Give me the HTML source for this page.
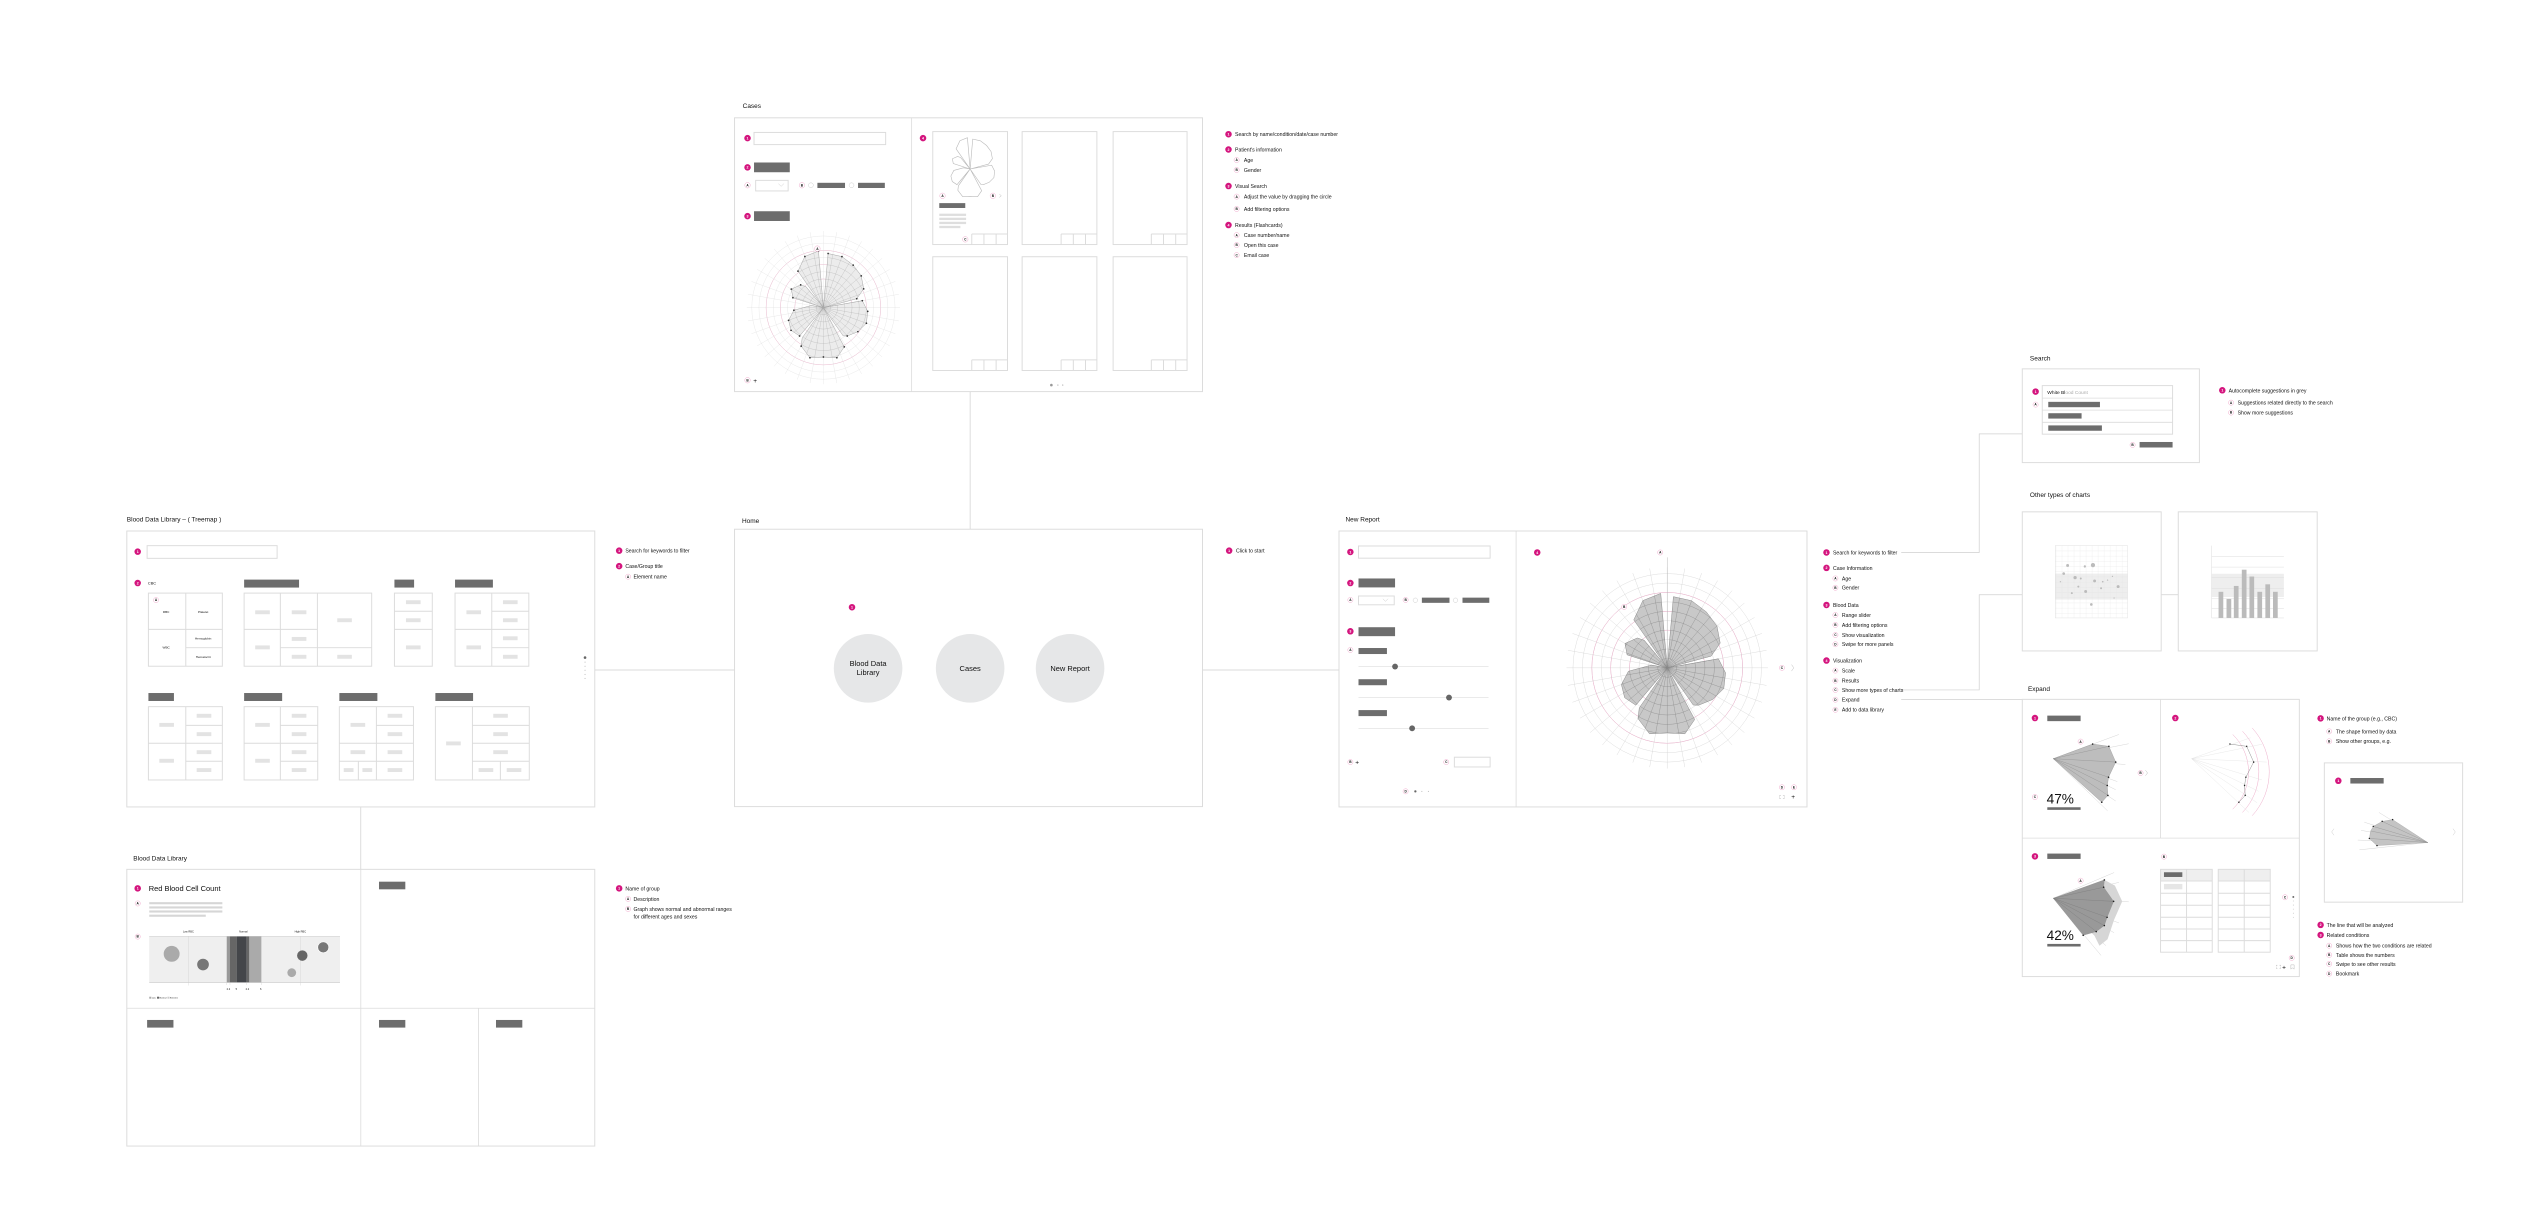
<!DOCTYPE html>
<html><head><meta charset="utf-8"><style>
html,body{margin:0;padding:0;background:#fff;width:2548px;height:1226px;overflow:hidden}
svg{display:block}
text{font-family:"Liberation Sans",Arial,sans-serif;fill:#111}
.f{fill:#fff;stroke:#dcdcdc;stroke-width:.6}
.fr{fill:none;stroke:#dcdcdc;stroke-width:.6}
.b{fill:#6d6d6d}
.lg{fill:#dedede}
.ln{stroke:#dcdcdc;stroke-width:.5;fill:none}
.cn{stroke:#d0d0d0;stroke-width:.45;fill:none}
.m circle{fill:#d4157e}
.m text{fill:#fff;font-size:2.2px;text-anchor:middle;font-weight:bold}
.k circle{fill:#fff;stroke:#f0a8cb;stroke-width:.3}
.k text{font-size:2px;text-anchor:middle;font-weight:bold}
.n{font-size:3.2px}
.ti{font-size:4px}
.tl{font-size:1.9px;fill:#888;text-anchor:middle}
</style></head><body>
<svg width="2548" height="1226" viewBox="0 0 1568 754.5" xmlns="http://www.w3.org/2000/svg">
<defs>
<g id="sp" stroke-width=".22">
<line x1="0" y1="-62" x2="0" y2="62"/><line x1="10.8" y1="-61.1" x2="-10.8" y2="61.1"/><line x1="21.2" y1="-58.3" x2="-21.2" y2="58.3"/><line x1="31" y1="-53.7" x2="-31" y2="53.7"/><line x1="39.9" y1="-47.5" x2="-39.9" y2="47.5"/><line x1="47.5" y1="-39.9" x2="-47.5" y2="39.9"/><line x1="53.7" y1="-31" x2="-53.7" y2="31"/><line x1="58.3" y1="-21.2" x2="-58.3" y2="21.2"/><line x1="61.1" y1="-10.8" x2="-61.1" y2="10.8"/><line x1="62" y1="0" x2="-62" y2="0"/><line x1="61.1" y1="10.8" x2="-61.1" y2="-10.8"/><line x1="58.3" y1="21.2" x2="-58.3" y2="-21.2"/><line x1="53.7" y1="31" x2="-53.7" y2="-31"/><line x1="47.5" y1="39.9" x2="-47.5" y2="-39.9"/><line x1="39.9" y1="47.5" x2="-39.9" y2="-47.5"/><line x1="31" y1="53.7" x2="-31" y2="-53.7"/><line x1="21.2" y1="58.3" x2="-21.2" y2="-58.3"/><line x1="10.8" y1="61.1" x2="-10.8" y2="-61.1"/>
</g>
<g id="rings" fill="none" stroke-width=".22">
<circle r="5.8"/><circle r="11.6"/><circle r="17.4"/><circle r="23.2"/><circle r="29"/><circle r="34.8"/><circle r="40.6"/><circle r="46.4"/><circle r="52.2"/><circle r="58"/>
</g>
<polygon id="pet" points="0,0 -20.6,-29.5 -15,-41.4 -4,-45.8 0,0 3.8,-43.8 15,-41.3 24.1,-34.4 30.6,-25.7 32.6,-15.2 27,-7.2 0,0 31.5,-5.6 35.9,3.1 34.8,12.7 27.9,19.5 19.3,23 16,22.9 0,0 16.9,31.8 10.9,40.6 0,40 -10.9,40.6 -18,31.2 -17.2,24.6 0,0 -19.3,23 -26.2,18.4 -28.2,10.3 -23.9,2.1 -9.8,-1.7 0,0 -24.7,-8 -26,-15 -18.4,-18.4 -14.1,-16.9 0,0"/>
<clipPath id="pc"><use href="#pet"/></clipPath>
<pattern id="gp" width="3.7" height="3.2" patternUnits="userSpaceOnUse"><path d="M3.7 0V3.2M0 3.2H3.7" stroke="#ddd" stroke-width=".25" fill="none"/></pattern>
</defs>

<!-- connectors -->
<path class="cn" d="M597 241V326M366 412.3H452M740 412.3H824M222 496.6V535M1170 340H1218V267H1244.5M1170 424.6H1218V366H1244.5M1330 366H1340.5M1170 430.4H1244.5"/>

<!-- ================= CASES ================= -->
<text class="ti" x="457" y="66.5">Cases</text>
<rect class="f" x="452" y="72.5" width="288" height="168.5"/>
<line class="ln" x1="561" y1="72.5" x2="561" y2="241"/>
<g class="m" transform="translate(460,85)"><circle r="2"/><text y=".8">1</text></g>
<rect class="f" x="464" y="81.5" width="81" height="7.5"/>
<g class="m" transform="translate(460,103)"><circle r="2"/><text y=".8">2</text></g>
<rect class="b" x="464" y="100" width="22" height="6"/>
<g class="k" transform="translate(460,114)"><circle r="1.7"/><text y=".7">A</text></g>
<rect class="f" x="465" y="111" width="20" height="6.5"/><path d="M479 113l1.7 1.7 1.7-1.7" stroke="#ccc" stroke-width=".3" fill="none"/>
<g class="k" transform="translate(493.5,114)"><circle r="1.7"/><text y=".7">B</text></g>
<circle cx="499" cy="114" r="1.5" fill="#fff" stroke="#ccc" stroke-width=".3"/><rect class="b" x="503" y="112.5" width="17" height="3.2"/>
<circle cx="524" cy="114" r="1.5" fill="#fff" stroke="#ccc" stroke-width=".3"/><rect class="b" x="528" y="112.5" width="16.5" height="3.2"/>
<g class="m" transform="translate(460,133)"><circle r="2"/><text y=".8">3</text></g>
<rect class="b" x="464" y="130" width="22" height="6"/>
<g transform="translate(506.7,189.3) scale(.76)">
<use href="#rings" stroke="#d8d8d8"/>
<g fill="none" stroke="#ecabc8" stroke-width=".3"><circle r="23.2"/><circle r="34.8"/><circle r="46.4"/></g>
<use href="#sp" stroke="#d8d8d8"/>
<use href="#pet" fill="#ececec" stroke="#888" stroke-width=".3"/>
<g clip-path="url(#pc)"><use href="#sp" stroke="#aaa"/><use href="#rings" stroke="#aaa"/></g>
<g fill="#333"><circle cx="-20.6" cy="-29.5" r=".7"/><circle cx="-15" cy="-41.4" r=".7"/><circle cx="-4" cy="-45.8" r=".7"/><circle cx="3.8" cy="-43.8" r=".7"/><circle cx="15" cy="-41.3" r=".7"/><circle cx="24.1" cy="-34.4" r=".7"/><circle cx="30.6" cy="-25.7" r=".7"/><circle cx="32.6" cy="-15.2" r=".7"/><circle cx="27" cy="-7.2" r=".7"/><circle cx="31.5" cy="-5.6" r=".7"/><circle cx="35.9" cy="3.1" r=".7"/><circle cx="34.8" cy="12.7" r=".7"/><circle cx="27.9" cy="19.5" r=".7"/><circle cx="19.3" cy="23" r=".7"/><circle cx="16.9" cy="31.8" r=".7"/><circle cx="10.9" cy="40.6" r=".7"/><circle cx="0" cy="40" r=".7"/><circle cx="-10.9" cy="40.6" r=".7"/><circle cx="-18" cy="31.2" r=".7"/><circle cx="-19.3" cy="23" r=".7"/><circle cx="-26.2" cy="18.4" r=".7"/><circle cx="-28.2" cy="10.3" r=".7"/><circle cx="-23.9" cy="2.1" r=".7"/><circle cx="-24.7" cy="-8" r=".7"/><circle cx="-26" cy="-15" r=".7"/><circle cx="-18.4" cy="-18.4" r=".7"/></g>
</g>
<g class="k" transform="translate(503,153)"><circle r="1.7"/><text y=".7">A</text></g>
<g class="k" transform="translate(460,234)"><circle r="1.7"/><text y=".7">B</text></g>
<text x="463.5" y="235.6" font-size="4">+</text>
<g class="m" transform="translate(568,85)"><circle r="2"/><text y=".8">4</text></g>
<!-- cards -->
<rect class="f" x="574" y="81" width="46" height="69.5"/>
<rect class="f" x="629" y="81" width="46" height="69.5"/>
<rect class="f" x="685" y="81" width="45.5" height="69.5"/>
<rect class="f" x="574" y="158" width="46" height="70"/>
<rect class="f" x="629" y="158" width="46" height="70"/>
<rect class="f" x="685" y="158" width="45.5" height="70"/>
<g class="fr"><path d="M598 144v6.5M605.5 144v6.5M613 144v6.5M598 144H620"/>
<path d="M653 144v6.5M660.5 144v6.5M668 144v6.5M653 144H675"/>
<path d="M708.5 144v6.5M716 144v6.5M723.5 144v6.5M708.5 144H730.5"/>
<path d="M598 221.5v6.5M605.5 221.5v6.5M613 221.5v6.5M598 221.5H620"/>
<path d="M653 221.5v6.5M660.5 221.5v6.5M668 221.5v6.5M653 221.5H675"/>
<path d="M708.5 221.5v6.5M716 221.5v6.5M723.5 221.5v6.5M708.5 221.5H730.5"/></g>
<g transform="translate(597,104) scale(.42)"><use href="#pet" fill="#fff" stroke="#bbb" stroke-width=".9"/></g>
<g class="k" transform="translate(580,120.5)"><circle r="1.7"/><text y=".7">A</text></g>
<g class="k" transform="translate(611,120.5)"><circle r="1.7"/><text y=".7">B</text></g>
<path d="M615 119.5l1.2 1-1.2 1" stroke="#bbb" stroke-width=".3" fill="none"/>
<rect class="b" x="578" y="125" width="16" height="3"/>
<rect class="lg" x="578" y="131.5" width="16.5" height="1.4"/><rect class="lg" x="578" y="134" width="16.5" height="1.4"/><rect class="lg" x="578" y="136.5" width="16.5" height="1.4"/><rect class="lg" x="578" y="139" width="13" height="1.4"/>
<g class="k" transform="translate(594,147.3)"><circle r="1.7"/><text y=".7">C</text></g>
<g fill="#999"><circle cx="647" cy="237" r=".8"/><circle cx="651" cy="237" r=".35"/><circle cx="654" cy="237" r=".35"/></g>
<!-- notes -->
<g class="m" transform="translate(756,82.6)"><circle r="2"/><text y=".8">1</text></g><text class="n" x="760" y="83.8">Search by name/condition/date/case number</text>
<g class="m" transform="translate(756,92)"><circle r="2"/><text y=".8">2</text></g><text class="n" x="760" y="93.2">Patient's information</text>
<g class="k" transform="translate(761,98.5)"><circle r="1.6"/><text y=".7">A</text></g><text class="n" x="765.5" y="99.7">Age</text>
<g class="k" transform="translate(761,104.6)"><circle r="1.6"/><text y=".7">B</text></g><text class="n" x="765.5" y="105.8">Gender</text>
<g class="m" transform="translate(756,114.5)"><circle r="2"/><text y=".8">3</text></g><text class="n" x="760" y="115.7">Visual Search</text>
<g class="k" transform="translate(761,121)"><circle r="1.6"/><text y=".7">A</text></g><text class="n" x="765.5" y="122.2">Adjust the value by dragging the circle</text>
<g class="k" transform="translate(761,128.6)"><circle r="1.6"/><text y=".7">B</text></g><text class="n" x="765.5" y="129.8">Add filtering options</text>
<g class="m" transform="translate(756,138.5)"><circle r="2"/><text y=".8">4</text></g><text class="n" x="760" y="139.7">Results (Flashcards)</text>
<g class="k" transform="translate(761,144.7)"><circle r="1.6"/><text y=".7">A</text></g><text class="n" x="765.5" y="145.9">Case number/name</text>
<g class="k" transform="translate(761,150.8)"><circle r="1.6"/><text y=".7">B</text></g><text class="n" x="765.5" y="152">Open this case</text>
<g class="k" transform="translate(761,157)"><circle r="1.6"/><text y=".7">C</text></g><text class="n" x="765.5" y="158.2">Email case</text>

<!-- ================= HOME ================= -->
<text class="ti" x="456.6" y="322">Home</text>
<rect class="f" x="452" y="325.7" width="288" height="170.7"/>
<g class="m" transform="translate(524.3,373.7)"><circle r="2"/><text y=".8">1</text></g>
<g fill="#e6e7e8"><circle cx="534.2" cy="411.3" r="21.1"/><circle cx="597" cy="411.3" r="21.1"/><circle cx="658.5" cy="411.3" r="21.1"/></g>
<g font-size="4.6" text-anchor="middle"><text x="534.2" y="410">Blood Data</text><text x="534.2" y="415.5">Library</text><text x="597" y="413">Cases</text><text x="658.5" y="413">New Report</text></g>
<g class="m" transform="translate(756.4,338.9)"><circle r="2"/><text y=".8">1</text></g><text class="n" x="760.6" y="340.1">Click to start</text>

<!-- ================= TREEMAP ================= -->
<text class="ti" x="78" y="321">Blood Data Library – ( Treemap )</text>
<rect class="f" x="78" y="326.8" width="288" height="169.8"/>
<g class="m" transform="translate(84.7,339.5)"><circle r="2"/><text y=".8">1</text></g>
<rect class="f" x="90.5" y="335.8" width="80" height="7.8"/>
<g class="m" transform="translate(84.7,358.8)"><circle r="2"/><text y=".8">2</text></g>
<text x="91" y="359.8" font-size="2.4">CBC</text>
<g class="fr">
<rect x="91.3" y="365" width="45.5" height="45"/><path d="M114.3 365V410M91.3 387.3H136.8M114.3 398.6H136.8"/>
<rect x="150.2" y="365" width="78.5" height="45"/><path d="M172.5 365V410M195.3 365V410M150.2 387.3H195.3M172.5 398.6H228.7"/>
<rect x="242.7" y="365" width="23.3" height="45"/><path d="M242.7 376.2H266M242.7 387.3H266"/>
<rect x="280" y="365" width="45.4" height="45"/><path d="M302.6 365V410M280 387.3H325.4M302.6 376.2H325.4M302.6 398.6H325.4"/>
<rect x="91.3" y="434.9" width="45.5" height="45.1"/><path d="M114.3 434.9V480M91.3 457.4H136.8M114.3 446.4H136.8M114.3 468.5H136.8"/>
<rect x="150.2" y="434.9" width="45.3" height="45.1"/><path d="M172.5 434.9V480M150.2 457.4H195.5M172.5 446.4H195.5M172.5 468.5H195.5"/>
<rect x="208.8" y="434.9" width="45.6" height="45.1"/><path d="M231.6 434.9V480M208.8 457.4H254.4M208.8 468.5H231.6M220.5 468.5V480M231.6 446.4H254.4M231.6 468.5H254.4"/>
<rect x="267.9" y="434.9" width="57.8" height="45.1"/><path d="M290.7 434.9V480M290.7 446.4H325.7M290.7 457.4H325.7M290.7 468.5H325.7M307.9 468.5V480"/>
</g>
<g class="b"><rect x="150.2" y="356.7" width="33.8" height="4.9"/><rect x="242.7" y="356.7" width="12.1" height="4.9"/><rect x="280" y="356.7" width="23.3" height="4.9"/>
<rect x="91.3" y="426.5" width="15.7" height="4.9"/><rect x="150.2" y="426.5" width="23.4" height="4.9"/><rect x="208.8" y="426.5" width="23.4" height="4.9"/><rect x="267.9" y="426.5" width="23.2" height="4.9"/></g>
<g class="k" transform="translate(96,369.3)"><circle r="1.6"/><text y=".7">A</text></g>
<g font-size="1.9" fill="#777" text-anchor="middle"><text x="102.2" y="377.4" fill="#777">RBC</text><text x="125" y="377.4" fill="#777">Platelet</text><text x="102.2" y="399.2" fill="#777">WBC</text><text x="125" y="393.6" fill="#777">Hemoglobin</text><text x="125" y="404.9" fill="#777">Hematocrit</text></g>
<g fill="#e3e3e3">
<rect x="157" y="375.6" width="9" height="2.4"/><rect x="179.5" y="375.6" width="9" height="2.4"/><rect x="207.5" y="380.5" width="9" height="2.4"/><rect x="157" y="397.2" width="9" height="2.4"/><rect x="179.5" y="392" width="9" height="2.4"/><rect x="179.5" y="403" width="9" height="2.4"/><rect x="207.5" y="403" width="9" height="2.4"/>
<rect x="249.8" y="369.4" width="9" height="2.4"/><rect x="249.8" y="380.5" width="9" height="2.4"/><rect x="249.8" y="397.2" width="9" height="2.4"/>
<rect x="287" y="375.6" width="9" height="2.4"/><rect x="309.5" y="369.4" width="9" height="2.4"/><rect x="309.5" y="380.5" width="9" height="2.4"/><rect x="287" y="397.2" width="9" height="2.4"/><rect x="309.5" y="391.6" width="9" height="2.4"/><rect x="309.5" y="403" width="9" height="2.4"/>
<rect x="98" y="444.9" width="9" height="2.4"/><rect x="121" y="439.3" width="9" height="2.4"/><rect x="121" y="450.6" width="9" height="2.4"/><rect x="98" y="467" width="9" height="2.4"/><rect x="121" y="461.7" width="9" height="2.4"/><rect x="121" y="472.7" width="9" height="2.4"/>
<rect x="157" y="444.9" width="9" height="2.4"/><rect x="179.5" y="439.3" width="9" height="2.4"/><rect x="179.5" y="450.6" width="9" height="2.4"/><rect x="157" y="467" width="9" height="2.4"/><rect x="179.5" y="461.7" width="9" height="2.4"/><rect x="179.5" y="472.7" width="9" height="2.4"/>
<rect x="215.7" y="444.9" width="9" height="2.4"/><rect x="238.5" y="439.3" width="9" height="2.4"/><rect x="238.5" y="450.6" width="9" height="2.4"/><rect x="215.7" y="461.7" width="9" height="2.4"/><rect x="238.5" y="461.7" width="9" height="2.4"/><rect x="238.5" y="472.7" width="9" height="2.4"/><rect x="211.5" y="472.7" width="6" height="2.4"/><rect x="223" y="472.7" width="6" height="2.4"/>
<rect x="274.5" y="456.3" width="9" height="2.4"/><rect x="303.5" y="439.3" width="9" height="2.4"/><rect x="303.5" y="450.6" width="9" height="2.4"/><rect x="303.5" y="461.7" width="9" height="2.4"/><rect x="294.5" y="472.7" width="9" height="2.4"/><rect x="311.8" y="472.7" width="9" height="2.4"/>
</g>
<circle cx="360" cy="404.7" r=".8" fill="#666"/><g fill="#aaa"><circle cx="360" cy="407.5" r=".3"/><circle cx="360" cy="410" r=".3"/><circle cx="360" cy="412.5" r=".3"/><circle cx="360" cy="415" r=".3"/><circle cx="360" cy="417.5" r=".3"/></g>
<g class="m" transform="translate(381,338.9)"><circle r="2"/><text y=".8">1</text></g><text class="n" x="384.8" y="340.1">Search for keywords to filter</text>
<g class="m" transform="translate(381,348.4)"><circle r="2"/><text y=".8">2</text></g><text class="n" x="384.8" y="349.6">Case/Group title</text>
<g class="k" transform="translate(386.5,354.9)"><circle r="1.6"/><text y=".7">A</text></g><text class="n" x="389.8" y="356.1">Element name</text>

<!-- ================= BLOOD DATA LIBRARY ================= -->
<text class="ti" x="82" y="529.5">Blood Data Library</text>
<rect class="f" x="78" y="535" width="288" height="170.3"/>
<path class="ln" d="M222 535V705.3M78 620.5H366M294.4 620.5V705.3"/>
<g class="m" transform="translate(84.7,546.7)"><circle r="2"/><text y=".8">1</text></g>
<text x="91.5" y="548.3" font-size="4.6">Red Blood Cell Count</text>
<g class="k" transform="translate(84.7,556)"><circle r="1.6"/><text y=".7">A</text></g>
<g fill="#d6d6d6"><rect x="91.8" y="555.2" width="45" height="1.3"/><rect x="91.8" y="557.8" width="45" height="1.3"/><rect x="91.8" y="560.3" width="45" height="1.3"/><rect x="91.8" y="562.9" width="34.8" height="1.3"/></g>
<g class="k" transform="translate(84.7,576.4)"><circle r="1.6"/><text y=".7">B</text></g>
<rect x="91.8" y="576.2" width="117.4" height="28.5" fill="#efefef"/>
<rect x="139.5" y="576.2" width="2" height="28.5" fill="#999"/><rect x="141.5" y="576.2" width="4.1" height="28.5" fill="#666"/><rect x="145.6" y="576.2" width="6.2" height="28.5" fill="#44464a"/><rect x="151.8" y="576.2" width="1.6" height="28.5" fill="#666"/><rect x="153.4" y="576.2" width="7.4" height="28.5" fill="#aaa"/>
<path d="M91.8 576.2H209.2M91.8 604.7H209.2" stroke="#ccc" stroke-width=".35"/>
<path d="M115.9 576.2V606.5M184.8 576.2V606.5M139.5 604.7v1.5M141.5 604.7v1.5M151.8 604.7v1.5M160.8 604.7v1.5" stroke="#ccc" stroke-width=".2"/>
<g font-size="1.6" text-anchor="middle"><text x="115.9" y="574">Low RBC</text><text x="149.7" y="574">Normal</text><text x="184.8" y="574">High RBC</text>
<text x="140.5" y="609.3">2.2</text><text x="145.4" y="609.3">5</text><text x="152.2" y="609.3">2.2</text><text x="160.4" y="609.3">6</text></g>
<circle cx="105.6" cy="587" r="4.9" fill="#aaa"/><circle cx="124.9" cy="593.6" r="3.6" fill="#777"/><circle cx="186" cy="588.1" r="3.2" fill="#666"/><circle cx="179.5" cy="598.6" r="2.7" fill="#aaa"/><circle cx="198.9" cy="583" r="3.4" fill="#777" stroke="#fff" stroke-width=".4"/>
<g fill="#aaa"><rect x="91.8" y="613.4" width="1.3" height="1.2"/><rect x="96.6" y="613.4" width="1.3" height="1.2" fill="#666"/><rect x="103" y="613.4" width="1.3" height="1.2" fill="#ccc"/></g>
<g font-size="1.3" fill="#666"><text x="93.4" y="614.5">Low</text><text x="98.2" y="614.5">Normal</text><text x="104.6" y="614.5">Extreme</text></g>
<g class="b"><rect x="233.2" y="542.6" width="16.2" height="4.7"/><rect x="90.5" y="627.7" width="16.2" height="4.7"/><rect x="233.2" y="627.7" width="16.2" height="4.7"/><rect x="305.2" y="627.7" width="16.2" height="4.7"/></g>
<g class="m" transform="translate(381,546.7)"><circle r="2"/><text y=".8">1</text></g><text class="n" x="384.8" y="547.9">Name of group</text>
<g class="k" transform="translate(386.5,553.2)"><circle r="1.6"/><text y=".7">A</text></g><text class="n" x="389.8" y="554.4">Description</text>
<g class="k" transform="translate(386.5,559.4)"><circle r="1.6"/><text y=".7">B</text></g><text class="n" x="389.8" y="560.6">Graph shows normal and abnormal ranges</text>
<text class="n" x="389.8" y="565.3">for different ages and sexes</text>

<!-- ================= NEW REPORT ================= -->
<text class="ti" x="828" y="321">New Report</text>
<rect class="f" x="824" y="326.8" width="288" height="169.8"/>
<line class="ln" x1="933" y1="326.8" x2="933" y2="496.6"/>
<g class="m" transform="translate(831,339.7)"><circle r="2"/><text y=".8">1</text></g>
<rect class="f" x="836" y="336" width="81" height="7.5"/>
<g class="m" transform="translate(831,358.8)"><circle r="2"/><text y=".8">2</text></g>
<rect class="b" x="836" y="356" width="22.5" height="5.5"/>
<g class="k" transform="translate(831,369.2)"><circle r="1.6"/><text y=".7">A</text></g>
<rect class="f" x="836" y="366.8" width="22" height="5.4"/><path d="M851 368.5l1.6 1.6 1.6-1.6" stroke="#ccc" stroke-width=".3" fill="none"/>
<g class="k" transform="translate(865,369.2)"><circle r="1.6"/><text y=".7">B</text></g>
<circle cx="871" cy="369.4" r="1.4" fill="#fff" stroke="#ccc" stroke-width=".3"/><rect class="b" x="875" y="367.8" width="17" height="3.2"/>
<circle cx="895.7" cy="369.4" r="1.4" fill="#fff" stroke="#ccc" stroke-width=".3"/><rect class="b" x="900" y="367.8" width="16.5" height="3.2"/>
<g class="m" transform="translate(831,388.5)"><circle r="2"/><text y=".8">3</text></g>
<rect class="b" x="836" y="386" width="22.5" height="5.5"/>
<g class="k" transform="translate(831,400)"><circle r="1.6"/><text y=".7">A</text></g>
<rect class="b" x="836" y="398.8" width="17.5" height="3.7"/>
<rect class="b" x="836" y="418" width="17.5" height="3.7"/>
<rect class="b" x="836" y="437" width="17.5" height="3.7"/>
<path d="M836 410.2H916M836 429.3H916M836 448.2H916" stroke="#ddd" stroke-width=".4"/>
<g fill="#666"><circle cx="858.5" cy="410.2" r="1.8"/><circle cx="891.7" cy="429.3" r="1.8"/><circle cx="869" cy="448.2" r="1.8"/></g>
<g class="k" transform="translate(831,469)"><circle r="1.6"/><text y=".7">B</text></g>
<text x="834" y="470.4" font-size="4">+</text>
<g class="k" transform="translate(890,469)"><circle r="1.6"/><text y=".7">C</text></g>
<rect class="f" x="895" y="466" width="22" height="6"/>
<g class="k" transform="translate(865,487)"><circle r="1.6"/><text y=".7">D</text></g>
<circle cx="871" cy="487" r=".7" fill="#666"/><circle cx="875" cy="487" r=".3" fill="#aaa"/><circle cx="879" cy="487" r=".3" fill="#aaa"/>
<g class="m" transform="translate(946,340)"><circle r="2"/><text y=".8">4</text></g>
<g transform="translate(1026,411)">
<use href="#rings" stroke="#cfcfcf"/>
<g fill="none" stroke="#ecabc8" stroke-width=".3"><circle r="23.2"/><circle r="34.8"/><circle r="46.4"/></g>
<use href="#sp" stroke="#cfcfcf"/>
<line x1="0" y1="0" x2="0" y2="-68" stroke="#aaa" stroke-width=".25"/>
<use href="#pet" fill="#c8c8c8" stroke="#888" stroke-width=".3"/>
<g clip-path="url(#pc)"><use href="#sp" stroke="#888"/><use href="#rings" stroke="#888"/></g>
</g>
<g class="k" transform="translate(1021.7,340)"><circle r="1.6"/><text y=".7">A</text></g>
<g class="k" transform="translate(999.5,373.5)"><circle r="1.6"/><text y=".7">B</text></g>
<g class="k" transform="translate(1096.6,411)"><circle r="1.6"/><text y=".7">C</text></g>
<path d="M1102.5 409l1.4 2-1.4 2" stroke="#bbb" stroke-width=".3" fill="none"/>
<g class="k" transform="translate(1096.6,484.5)"><circle r="1.6"/><text y=".7">D</text></g>
<g class="k" transform="translate(1104,484.5)"><circle r="1.6"/><text y=".7">E</text></g>
<path d="M1096 489.5h-.8v.8M1097.2 489.5h.8v.8M1096 491.5h-.8v-.8M1097.2 491.5h.8v-.8" stroke="#aaa" stroke-width=".25" fill="none"/>
<text x="1102.3" y="491.8" font-size="4" fill="#444">+</text>
<g class="m" transform="translate(1124,340)"><circle r="2"/><text y=".8">1</text></g><text class="n" x="1128" y="341.2">Search for keywords to filter</text>
<g class="m" transform="translate(1124,349.5)"><circle r="2"/><text y=".8">2</text></g><text class="n" x="1128" y="350.7">Case Information</text>
<g class="k" transform="translate(1129.5,356)"><circle r="1.6"/><text y=".7">A</text></g><text class="n" x="1133.5" y="357.2">Age</text>
<g class="k" transform="translate(1129.5,361.7)"><circle r="1.6"/><text y=".7">B</text></g><text class="n" x="1133.5" y="362.9">Gender</text>
<g class="m" transform="translate(1124,372.3)"><circle r="2"/><text y=".8">3</text></g><text class="n" x="1128" y="373.5">Blood Data</text>
<g class="k" transform="translate(1129.5,378.5)"><circle r="1.6"/><text y=".7">A</text></g><text class="n" x="1133.5" y="379.7">Range slider</text>
<g class="k" transform="translate(1129.5,384.6)"><circle r="1.6"/><text y=".7">B</text></g><text class="n" x="1133.5" y="385.8">Add filtering options</text>
<g class="k" transform="translate(1129.5,390.8)"><circle r="1.6"/><text y=".7">C</text></g><text class="n" x="1133.5" y="392">Show visualization</text>
<g class="k" transform="translate(1129.5,396.5)"><circle r="1.6"/><text y=".7">D</text></g><text class="n" x="1133.5" y="397.7">Swipe for more panels</text>
<g class="m" transform="translate(1124,406.5)"><circle r="2"/><text y=".8">4</text></g><text class="n" x="1128" y="407.7">Visualization</text>
<g class="k" transform="translate(1129.5,412.7)"><circle r="1.6"/><text y=".7">A</text></g><text class="n" x="1133.5" y="413.9">Scale</text>
<g class="k" transform="translate(1129.5,418.9)"><circle r="1.6"/><text y=".7">B</text></g><text class="n" x="1133.5" y="420.1">Results</text>
<g class="k" transform="translate(1129.5,424.6)"><circle r="1.6"/><text y=".7">C</text></g><text class="n" x="1133.5" y="425.8">Show more types of charts</text>
<g class="k" transform="translate(1129.5,430.6)"><circle r="1.6"/><text y=".7">D</text></g><text class="n" x="1133.5" y="431.8">Expand</text>
<g class="k" transform="translate(1129.5,436.8)"><circle r="1.6"/><text y=".7">E</text></g><text class="n" x="1133.5" y="438">Add to data library</text>

<!-- ================= SEARCH ================= -->
<text class="ti" x="1249.2" y="222">Search</text>
<rect class="f" x="1244.5" y="227" width="109" height="57.7"/>
<g class="m" transform="translate(1252.7,241)"><circle r="2"/><text y=".8">1</text></g>
<rect class="f" x="1256.8" y="237.3" width="80.2" height="29.9"/>
<path class="ln" d="M1256.8 245H1337M1256.8 252.4H1337M1256.8 259.9H1337"/>
<text x="1259.9" y="242.6" font-size="3">White Bl<tspan fill="#aaa">ood Count</tspan></text>
<g class="k" transform="translate(1252.7,249)"><circle r="1.6"/><text y=".7">A</text></g>
<g class="b"><rect x="1260.5" y="247.3" width="31.8" height="3.3"/><rect x="1260.5" y="254.3" width="20.5" height="3.3"/><rect x="1260.5" y="261.8" width="33" height="3.3"/><rect x="1316.7" y="272" width="20.3" height="3.4"/></g>
<g class="k" transform="translate(1312.4,273.8)"><circle r="1.6"/><text y=".7">B</text></g>
<g class="m" transform="translate(1367.6,240.2)"><circle r="2"/><text y=".8">1</text></g><text class="n" x="1371.5" y="241.4">Autocomplete suggestions in grey</text>
<g class="k" transform="translate(1373,247.8)"><circle r="1.6"/><text y=".7">A</text></g><text class="n" x="1377" y="249">Suggestions related directly to the search</text>
<g class="k" transform="translate(1373,253.9)"><circle r="1.6"/><text y=".7">B</text></g><text class="n" x="1377" y="255.1">Show more suggestions</text>

<!-- ================= OTHER CHARTS ================= -->
<text class="ti" x="1249.2" y="306">Other types of charts</text>
<rect class="f" x="1244.5" y="315" width="85.5" height="85.6"/>
<rect class="f" x="1340.5" y="315" width="85.5" height="85.6"/>
<rect x="1264.8" y="353" width="44.5" height="16" fill="#eee"/>
<rect x="1264.8" y="335.8" width="44.5" height="44.5" fill="url(#gp)" stroke="#ddd" stroke-width=".25"/>
<g fill="#bbb"><circle cx="1272.4" cy="348" r=".9"/><circle cx="1283" cy="348.6" r=".7"/><circle cx="1288" cy="347.8" r="1.3"/><circle cx="1270" cy="353" r=".8"/><circle cx="1277" cy="355.5" r="1"/><circle cx="1280.5" cy="356" r=".6"/><circle cx="1289" cy="357.5" r=".9"/><circle cx="1294" cy="358" r=".5"/><circle cx="1300" cy="354.7" r=".4"/><circle cx="1303.5" cy="361" r=".9"/><circle cx="1279" cy="361" r=".6"/><circle cx="1283.5" cy="364" r=".9"/><circle cx="1293" cy="362" r=".6"/><circle cx="1275" cy="365" r=".6"/><circle cx="1297" cy="357" r=".4"/><circle cx="1301" cy="368" r=".4"/><circle cx="1287" cy="372" r=".8"/><circle cx="1268" cy="358" r=".4"/></g>
<rect x="1361" y="353.1" width="44.5" height="14.3" fill="#eee"/>
<path d="M1361 335.8V380.3M1361 342.6H1405.5M1361 349H1405.5M1361 355.5H1405.5M1361 362H1405.5M1361 368.5H1405.5M1361 374.4H1405.5M1361 380.3H1405.5" stroke="#ddd" stroke-width=".3"/>
<g fill="#bbb"><rect x="1365.3" y="364.2" width="2.9" height="16.1"/><rect x="1370.2" y="368.6" width="2.9" height="11.7"/><rect x="1374.7" y="360.6" width="2.9" height="19.7"/><rect x="1379.6" y="350.6" width="2.9" height="29.7"/><rect x="1384.3" y="354.8" width="2.9" height="25.5"/><rect x="1389.2" y="364.2" width="2.9" height="16.1"/><rect x="1394.1" y="359.6" width="2.9" height="20.7"/><rect x="1398.8" y="364.2" width="2.9" height="16.1"/></g>

<!-- ================= EXPAND ================= -->
<text class="ti" x="1248" y="425.3">Expand</text>
<rect class="f" x="1244.5" y="430.4" width="170.5" height="170.6"/>
<path class="ln" d="M1329.6 430.4V515.8M1244.5 515.8H1415"/>
<g class="m" transform="translate(1252.3,441.9)"><circle r="2"/><text y=".8">1</text></g>
<rect class="b" x="1259.9" y="440.4" width="20.5" height="3.4"/>
<g stroke="#ccc" stroke-width=".25"><path d="M1263.6 466.9L1304 452M1263.6 466.9L1310 457.7M1263.6 466.9L1308 470.5M1263.6 466.9L1303 481M1263.6 466.9L1302 486M1263.6 466.9L1302 493M1263.6 466.9L1297 499"/></g>
<polygon points="1263.6,466.9 1287.8,457.9 1297.8,459.3 1302,469 1297.6,478.3 1296.8,483.4 1297.2,489.5 1293.4,493.7" fill="#bdbdbd" stroke="#999" stroke-width=".25"/>
<g stroke="#888" stroke-width=".2"><path d="M1263.6 466.9L1297.8 459.3M1263.6 466.9L1302 469M1263.6 466.9L1297.6 478.3M1263.6 466.9L1296.8 483.4M1263.6 466.9L1297.2 489.5"/></g>
<g fill="#222"><circle cx="1287.8" cy="457.9" r=".5"/><circle cx="1297.8" cy="459.3" r=".5"/><circle cx="1302" cy="469" r=".5"/><circle cx="1297.6" cy="478.3" r=".5"/><circle cx="1296.8" cy="483.4" r=".5"/><circle cx="1297.2" cy="489.5" r=".5"/><circle cx="1293.4" cy="493.7" r=".5"/></g>
<g class="k" transform="translate(1280.4,456.4)"><circle r="1.6"/><text y=".7">A</text></g>
<g class="k" transform="translate(1317.3,475.7)"><circle r="1.6"/><text y=".7">B</text></g>
<path d="M1320.3 474l1.3 1.7-1.3 1.7" stroke="#bbb" stroke-width=".3" fill="none"/>
<g class="k" transform="translate(1252.3,490.5)"><circle r="1.6"/><text y=".7">C</text></g>
<text x="1259.5" y="494.6" font-size="8.4" fill="#555">47%</text>
<rect class="b" x="1259.9" y="496.8" width="20.5" height="1.6"/>
<g class="m" transform="translate(1338.7,441.9)"><circle r="2"/><text y=".8">2</text></g>
<g fill="none" stroke="#ecabc8" stroke-width=".3"><path d="M1374 452a32 32 0 0 1 0 46M1380 450a36 36 0 0 1 0 50M1386 448a40 40 0 0 1 0 54"/></g>
<g stroke="#ddd" stroke-width=".2"><path d="M1348.7 466.9L1385 454M1348.7 466.9L1392 458M1348.7 466.9L1395 469M1348.7 466.9L1392 480M1348.7 466.9L1390 487M1348.7 466.9L1389 494M1348.7 466.9L1384 500"/></g>
<polyline points="1372.3,457.9 1382.6,459.3 1386.9,469 1382.1,478.3 1381.3,483.4 1381.7,489.5 1377.8,493.7" fill="none" stroke="#777" stroke-width=".25"/>
<g fill="#222"><circle cx="1372.3" cy="457.9" r=".45"/><circle cx="1382.6" cy="459.3" r=".45"/><circle cx="1386.9" cy="469" r=".45"/><circle cx="1382.1" cy="478.3" r=".45"/><circle cx="1381.3" cy="483.4" r=".45"/><circle cx="1381.7" cy="489.5" r=".45"/><circle cx="1377.8" cy="493.7" r=".45"/></g>
<g class="m" transform="translate(1252.3,527)"><circle r="2"/><text y=".8">3</text></g>
<rect class="b" x="1259.9" y="525.3" width="20.5" height="3.3"/>
<g stroke="#ccc" stroke-width=".25"><path d="M1263.6 552.8L1301 537M1263.6 552.8L1304 543M1263.6 552.8L1310 555M1263.6 552.8L1304 568M1263.6 552.8L1301 574M1263.6 552.8L1296 582M1263.6 552.8L1293 588"/></g>
<polygon points="1263.6,552.8 1295,541.5 1301.5,545 1306,554.7 1301,566 1297,578 1292,582 1288.8,575.6" fill="#d6d6d6"/>
<polygon points="1263.6,552.8 1295,541.5 1294.6,546 1300.7,554.7 1296.7,564.5 1295,569.6 1290,573.3 1282,575.6" fill="#999" stroke="#888" stroke-width=".2"/>
<g stroke="#777" stroke-width=".2"><path d="M1263.6 552.8L1294.6 546M1263.6 552.8L1300.7 554.7M1263.6 552.8L1296.7 564.5M1263.6 552.8L1295 569.6M1263.6 552.8L1290 573.3"/></g>
<g fill="#222"><circle cx="1295" cy="541.5" r=".5"/><circle cx="1294.6" cy="546" r=".5"/><circle cx="1300.7" cy="554.7" r=".5"/><circle cx="1296.7" cy="564.5" r=".5"/><circle cx="1295" cy="569.6" r=".5"/><circle cx="1290" cy="573.3" r=".5"/><circle cx="1282" cy="575.6" r=".5"/></g>
<g class="k" transform="translate(1280.4,542)"><circle r="1.6"/><text y=".7">A</text></g>
<text x="1259.5" y="578.5" font-size="8.4" fill="#555">42%</text>
<rect class="b" x="1259.9" y="580.9" width="20.5" height="1.6"/>
<g class="k" transform="translate(1331.7,527.2)"><circle r="1.6"/><text y=".7">B</text></g>
<rect x="1329.6" y="535" width="31.8" height="7.2" fill="#efefef"/><rect x="1365.1" y="535" width="32" height="7.2" fill="#efefef"/>
<g class="fr"><rect x="1329.6" y="535" width="31.8" height="51"/><rect x="1365.1" y="535" width="32" height="51"/>
<path d="M1345.6 535V586M1381.1 535V586M1329.6 542.2H1361.4M1329.6 549.7H1361.4M1329.6 557.1H1361.4M1329.6 564.5H1361.4M1329.6 571.7H1361.4M1329.6 578.9H1361.4M1365.1 542.2H1397.1M1365.1 549.7H1397.1M1365.1 557.1H1397.1M1365.1 564.5H1397.1M1365.1 571.7H1397.1M1365.1 578.9H1397.1"/></g>
<rect class="b" x="1331.7" y="536.8" width="11.3" height="2.9"/>
<rect x="1331.7" y="544" width="11.3" height="3.3" fill="#e6e6e6"/>
<g class="k" transform="translate(1406.2,552.2)"><circle r="1.6"/><text y=".7">C</text></g>
<circle cx="1411.3" cy="552" r=".6" fill="#666"/><g fill="#aaa"><circle cx="1411.3" cy="554.5" r=".25"/><circle cx="1411.3" cy="557" r=".25"/><circle cx="1411.3" cy="559.5" r=".25"/><circle cx="1411.3" cy="562" r=".25"/><circle cx="1411.3" cy="564.5" r=".25"/></g>
<g class="k" transform="translate(1410.3,589.5)"><circle r="1.6"/><text y=".7">D</text></g>
<path d="M1401.5 594h-.7v.7M1402.8 594h.7v.7M1401.5 596h-.7v-.7M1402.8 596h.7v-.7" stroke="#aaa" stroke-width=".25" fill="none"/>
<text x="1404.4" y="596.6" font-size="4" fill="#444">+</text>
<path d="M1409.8 593.8h2v2.6l-1-.8-1 .8z" stroke="#aaa" stroke-width=".25" fill="none"/>
<!-- expand notes -->
<g class="m" transform="translate(1428.1,442.1)"><circle r="2"/><text y=".8">1</text></g><text class="n" x="1431.8" y="443.3">Name of the group (e.g., CBC)</text>
<g class="k" transform="translate(1433.4,450.1)"><circle r="1.6"/><text y=".7">A</text></g><text class="n" x="1437.5" y="451.3">The shape formed by data</text>
<g class="k" transform="translate(1433.4,456.2)"><circle r="1.6"/><text y=".7">B</text></g><text class="n" x="1437.5" y="457.4">Show other groups, e.g.</text>
<rect class="f" x="1430.4" y="469.5" width="85.1" height="85.7"/>
<g class="m" transform="translate(1439,480.5)"><circle r="2"/><text y=".8">1</text></g>
<rect class="b" x="1446.4" y="478.8" width="20.5" height="3.4"/>
<g stroke="#ccc" stroke-width=".25"><path d="M1494 518.5L1464 500M1494 518.5L1455 506M1494 518.5L1453 511M1494 518.5L1451 517M1494 518.5L1452 523"/></g>
<polygon points="1494,518.5 1472.4,504.4 1466,505.5 1460.5,508.6 1458.9,511.4 1458.1,516 1462.8,520.4" fill="#c4c4c4" stroke="#999" stroke-width=".2"/>
<g stroke="#888" stroke-width=".2"><path d="M1494 518.5L1466 505.5M1494 518.5L1460.5 508.6M1494 518.5L1458.9 511.4M1494 518.5L1458.1 516"/></g>
<g fill="#222"><circle cx="1472.4" cy="504.4" r=".45"/><circle cx="1466" cy="505.5" r=".45"/><circle cx="1460.5" cy="508.6" r=".45"/><circle cx="1458.1" cy="516" r=".45"/><circle cx="1462.8" cy="520.4" r=".45"/></g>
<path d="M1436.3 510l-1.4 2 1.4 2M1509.6 510l1.4 2-1.4 2" stroke="#ccc" stroke-width=".3" fill="none"/>
<g class="m" transform="translate(1428.1,569.2)"><circle r="2"/><text y=".8">2</text></g><text class="n" x="1431.8" y="570.4">The line that will be analyzed</text>
<g class="m" transform="translate(1428.1,575.4)"><circle r="2"/><text y=".8">3</text></g><text class="n" x="1431.8" y="576.6">Related conditions</text>
<g class="k" transform="translate(1433.4,582)"><circle r="1.6"/><text y=".7">A</text></g><text class="n" x="1437.5" y="583.2">Shows how the two conditions are related</text>
<g class="k" transform="translate(1433.4,587.7)"><circle r="1.6"/><text y=".7">B</text></g><text class="n" x="1437.5" y="588.9">Table shows the numbers</text>
<g class="k" transform="translate(1433.4,593.2)"><circle r="1.6"/><text y=".7">C</text></g><text class="n" x="1437.5" y="594.4">Swipe to see other results</text>
<g class="k" transform="translate(1433.4,599.2)"><circle r="1.6"/><text y=".7">D</text></g><text class="n" x="1437.5" y="600.4">Bookmark</text>
</svg>
</body></html>
